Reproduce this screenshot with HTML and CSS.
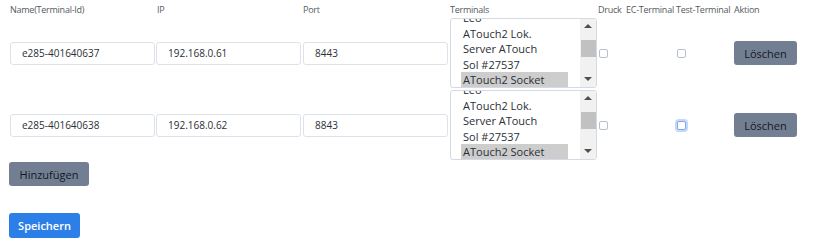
FILE: index.html
```html
<!DOCTYPE html>
<html lang="de">
<head>
    <meta charset="UTF-8">
    <meta name="viewport" content="width=device-width, initial-scale=1.0">
    <title>Terminals</title>
    <link rel="stylesheet" href="styles.css">
</head>
<body>

    <div class="page">
        <div class="terminal-grid">
            <!-- Kopfzeile -->
            <div class="head">Name(Terminal-Id)</div>
            <div class="head head-ip">IP</div>
            <div class="head">Port</div>
            <div class="head">Terminals</div>
            <div class="head">Druck</div>
            <div class="head">EC-Terminal</div>
            <div class="head">Test-Terminal</div>
            <div class="head">Aktion</div>

            <!-- Zeile 1 -->
            <div class="cell"><input class="field" type="text" value="e285-401640637"></div>
            <div class="cell"><input class="field" type="text" value="192.168.0.61"></div>
            <div class="cell"><input class="field" type="text" value="8443"></div>
            <div class="cell">
                <div class="listbox">
                    <div class="options">
                        <div class="option">Leo</div>
                        <div class="option">ATouch2 Lok.</div>
                        <div class="option">Server ATouch</div>
                        <div class="option">Sol #27537</div>
                        <div class="option selected">ATouch2 Socket</div>
                    </div>
                    <div class="scrollbar">
                        <span class="arrow up"></span>
                        <span class="thumb"></span>
                        <span class="arrow down"></span>
                    </div>
                </div>
            </div>
            <div class="cell"><span class="check"></span></div>
            <div class="cell"></div>
            <div class="cell"><span class="check"></span></div>
            <div class="cell"><button class="btn btn-gray">Löschen</button></div>

            <!-- Zeile 2 -->
            <div class="cell"><input class="field" type="text" value="e285-401640638"></div>
            <div class="cell"><input class="field" type="text" value="192.168.0.62"></div>
            <div class="cell"><input class="field" type="text" value="8843"></div>
            <div class="cell">
                <div class="listbox">
                    <div class="options">
                        <div class="option">Leo</div>
                        <div class="option">ATouch2 Lok.</div>
                        <div class="option">Server ATouch</div>
                        <div class="option">Sol #27537</div>
                        <div class="option selected">ATouch2 Socket</div>
                    </div>
                    <div class="scrollbar">
                        <span class="arrow up"></span>
                        <span class="thumb"></span>
                        <span class="arrow down"></span>
                    </div>
                </div>
            </div>
            <div class="cell"><span class="check"></span></div>
            <div class="cell"></div>
            <div class="cell"><span class="check focused"></span></div>
            <div class="cell"><button class="btn btn-gray">Löschen</button></div>
        </div>

        <button class="btn btn-gray btn-add">Hinzufügen</button>
        <button class="btn btn-blue btn-save">Speichern</button>
    </div>

</body>
</html>
```

FILE: styles.css
```css
body {
    margin: 0;
    padding: 0;
    background-color: #ffffff;
    font-family: 'Open Sans', 'Noto Sans', sans-serif;
    color: #212529;
}

.page {
    padding: 0 9px;
    display: flex;
    flex-direction: column;
    align-items: flex-start;
}

/* Tabelle der Terminals */
.terminal-grid {
    display: grid;
    grid-template-columns: 146px 147px 147px 148px 28px 50px 58px 70px;
    grid-template-rows: 17px 72px 72px;
    padding-left: 1px;
}

.head {
    font-size: 9px;
    letter-spacing: -0.25px;
    color: #555a60;
    padding-top: 3px;
    white-space: nowrap;
}

.head-ip {
    padding-left: 1px;
}

.cell {
    display: flex;
    align-items: center;
    padding: 1px 0;
}

.field {
    box-sizing: border-box;
    width: 145px;
    height: 23px;
    border: 1px solid #dde2ea;
    border-radius: 3px;
    padding: 0 11px;
    font-family: inherit;
    font-size: 10px;
    color: #2a2f36;
    outline: none;
}

/* Auswahlliste mit Bildlaufleiste */
.listbox {
    box-sizing: border-box;
    width: 147px;
    height: 70px;
    border: 1px solid #d4dae3;
    border-radius: 3px;
    display: flex;
    overflow: hidden;
}

.options {
    flex: 1;
    padding: 0 12px 0 10px;
    overflow: hidden;
}

.option {
    height: 15.5px;
    line-height: 15.5px;
    font-size: 11px;
    color: #2a2f36;
    padding-left: 2px;
    white-space: nowrap;
}

.option:first-child {
    margin-top: -9px;
}

.option.selected {
    background-color: #cdcdcd;
}

.scrollbar {
    width: 16px;
    background-color: #f1f1f1;
    display: flex;
    flex-direction: column;
    align-items: center;
}

.arrow {
    width: 0;
    height: 0;
    border-left: 4px solid transparent;
    border-right: 4px solid transparent;
}

.arrow.up {
    margin-top: 5px;
    border-bottom: 4px solid #505050;
}

.arrow.down {
    margin-top: auto;
    margin-bottom: 6px;
    border-top: 4px solid #505050;
}

.thumb {
    width: 15px;
    height: 17px;
    margin-top: 12px;
    background-color: #c1c1c1;
}

.check {
    box-sizing: border-box;
    width: 9px;
    height: 9px;
    border: 1px solid #b7c0cf;
    border-radius: 2px;
    margin-left: 1px;
    background-color: #fff;
}

.check.focused {
    border-color: #86a8e7;
    box-shadow: 0 0 0 2px #c5d8fb;
}

.btn {
    font-family: inherit;
    font-size: 11px;
    border: none;
    border-radius: 3px;
    cursor: pointer;
    padding: 0 12px;
}

.btn-gray {
    background-color: #727f93;
    color: #14181d;
    height: 24px;
    width: 63px;
    padding: 0;
}

.btn-add {
    margin-top: 1px;
    width: 80px;
}

.btn-blue {
    background-color: #2d7fe8;
    color: #ffffff;
    font-weight: 600;
}

.btn-save {
    margin-top: 27px;
    height: 25px;
    width: 71px;
    padding: 0;
}
```
